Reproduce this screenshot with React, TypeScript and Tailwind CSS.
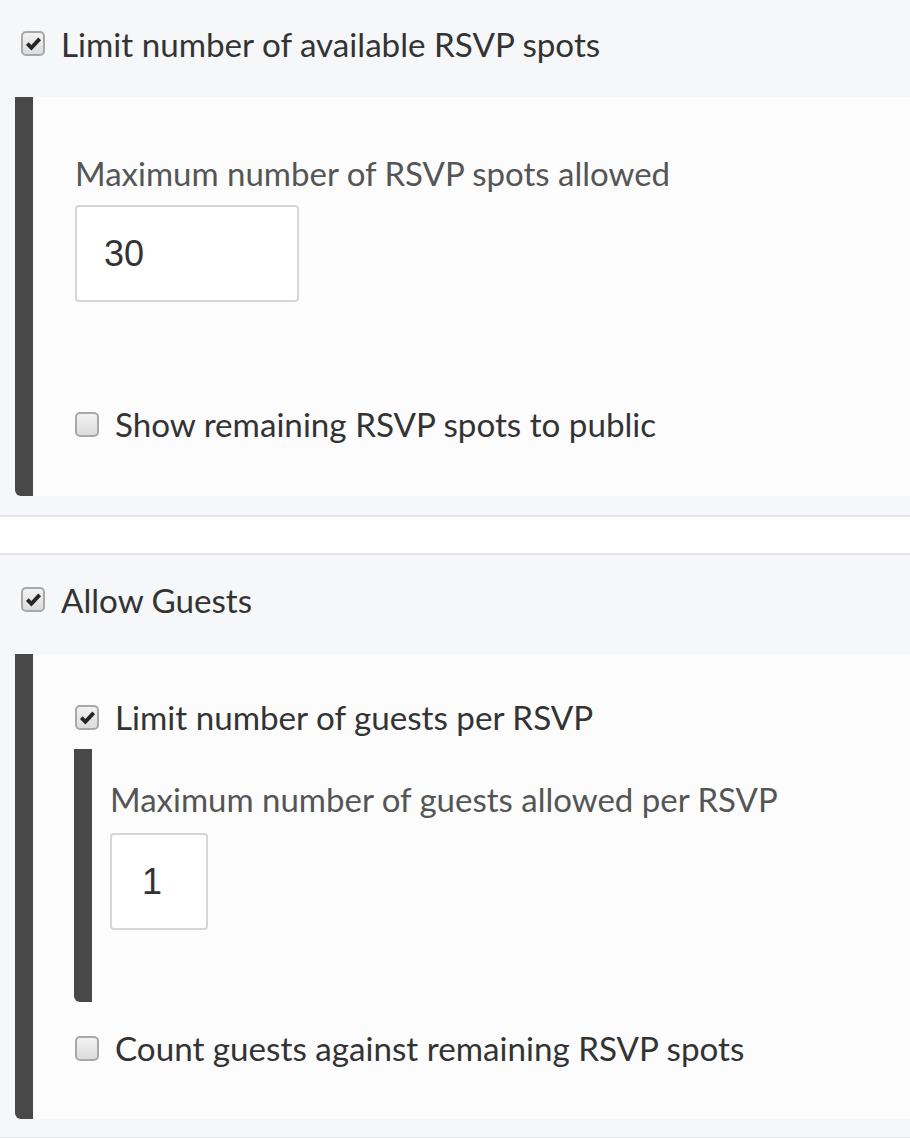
import React from "react";

const font = { fontFamily: "Lato, 'Noto Sans', sans-serif" };

function Box({ checked }: { checked?: boolean }) {
  return (
    <span className="flex h-[25px] w-[24px] shrink-0 items-center justify-center rounded-[5px] border-2 border-[#a8a8a8] bg-gradient-to-b from-[#f2f2f2] to-[#dcdcdc]">
      {checked && (
        <svg viewBox="0 0 16 16" className="h-[17px] w-[17px]">
          <path d="M2.2 8.2 L6 12 L13.8 3.6" fill="none" stroke="#262626" strokeWidth="3.6" strokeLinecap="butt" strokeLinejoin="miter" />
        </svg>
      )}
    </span>
  );
}

function CheckRow({ label, checked }: { label: string; checked?: boolean }) {
  return (
    <div className="flex h-[44px] items-center gap-[16px]">
      <Box checked={checked} />
      <span className="text-[33.2px] leading-[44px] text-[#333]">{label}</span>
    </div>
  );
}

function NumberField({ value, width }: { value: string; width: string }) {
  return (
    <div
      className={`flex h-[97px] items-center rounded-[4px] border-2 border-[#d3d6db] bg-white pl-[27px] text-[36px] text-[#333] ${width}`}
      style={{ fontFamily: "'Liberation Sans', Arial, sans-serif" }}
    >
      {value}
    </div>
  );
}

export default function App() {
  return (
    <div className="w-[910px] bg-white" style={font}>
      <section className="border-b-2 border-[#e3e5ea] bg-[#f6f7f9] pb-[19px]">
        <div className="flex h-[97px] items-center pb-[10px] pl-[21px]">
          <CheckRow label="Limit number of available RSVP spots" checked />
        </div>
        <div className="ml-[15px] rounded-bl-[6px] border-l-[18px] border-[#484848] bg-[#fcfcfc] pb-[50px] pl-[42px] pt-[54px]">
          <div className="text-[33px] leading-[44px] text-[#555]">Maximum number of RSVP spots allowed</div>
          <div className="mt-[10px]">
            <NumberField value="30" width="w-[224px]" />
          </div>
          <div className="mt-[100px]">
            <CheckRow label="Show remaining RSVP spots to public" />
          </div>
        </div>
      </section>

      <div className="h-[36px] bg-white" />

      <section className="border-y-2 border-[#e3e5ea] bg-[#f6f7f9] pb-[18px]">
        <div className="flex h-[99px] items-center pb-[10px] pl-[21px]">
          <CheckRow label="Allow Guests" checked />
        </div>
        <div className="ml-[15px] rounded-bl-[6px] border-l-[18px] border-[#484848] bg-[#fcfcfc] pb-[49px] pt-[41px]">
          <div className="pl-[42px]">
            <CheckRow label="Limit number of guests per RSVP" checked />
          </div>
          <div className="ml-[41px] mt-[10px] rounded-bl-[6px] border-l-[18px] border-[#484848] pb-[72px] pl-[18px] pt-[28px]">
            <div className="text-[33px] leading-[44px] text-[#555]">Maximum number of guests allowed per RSVP</div>
            <div className="mt-[12px]">
              <NumberField value="1" width="w-[98px] pl-[30px]" />
            </div>
          </div>
          <div className="mt-[24px] pl-[42px]">
            <CheckRow label="Count guests against remaining RSVP spots" />
          </div>
        </div>
      </section>
    </div>
  );
}
